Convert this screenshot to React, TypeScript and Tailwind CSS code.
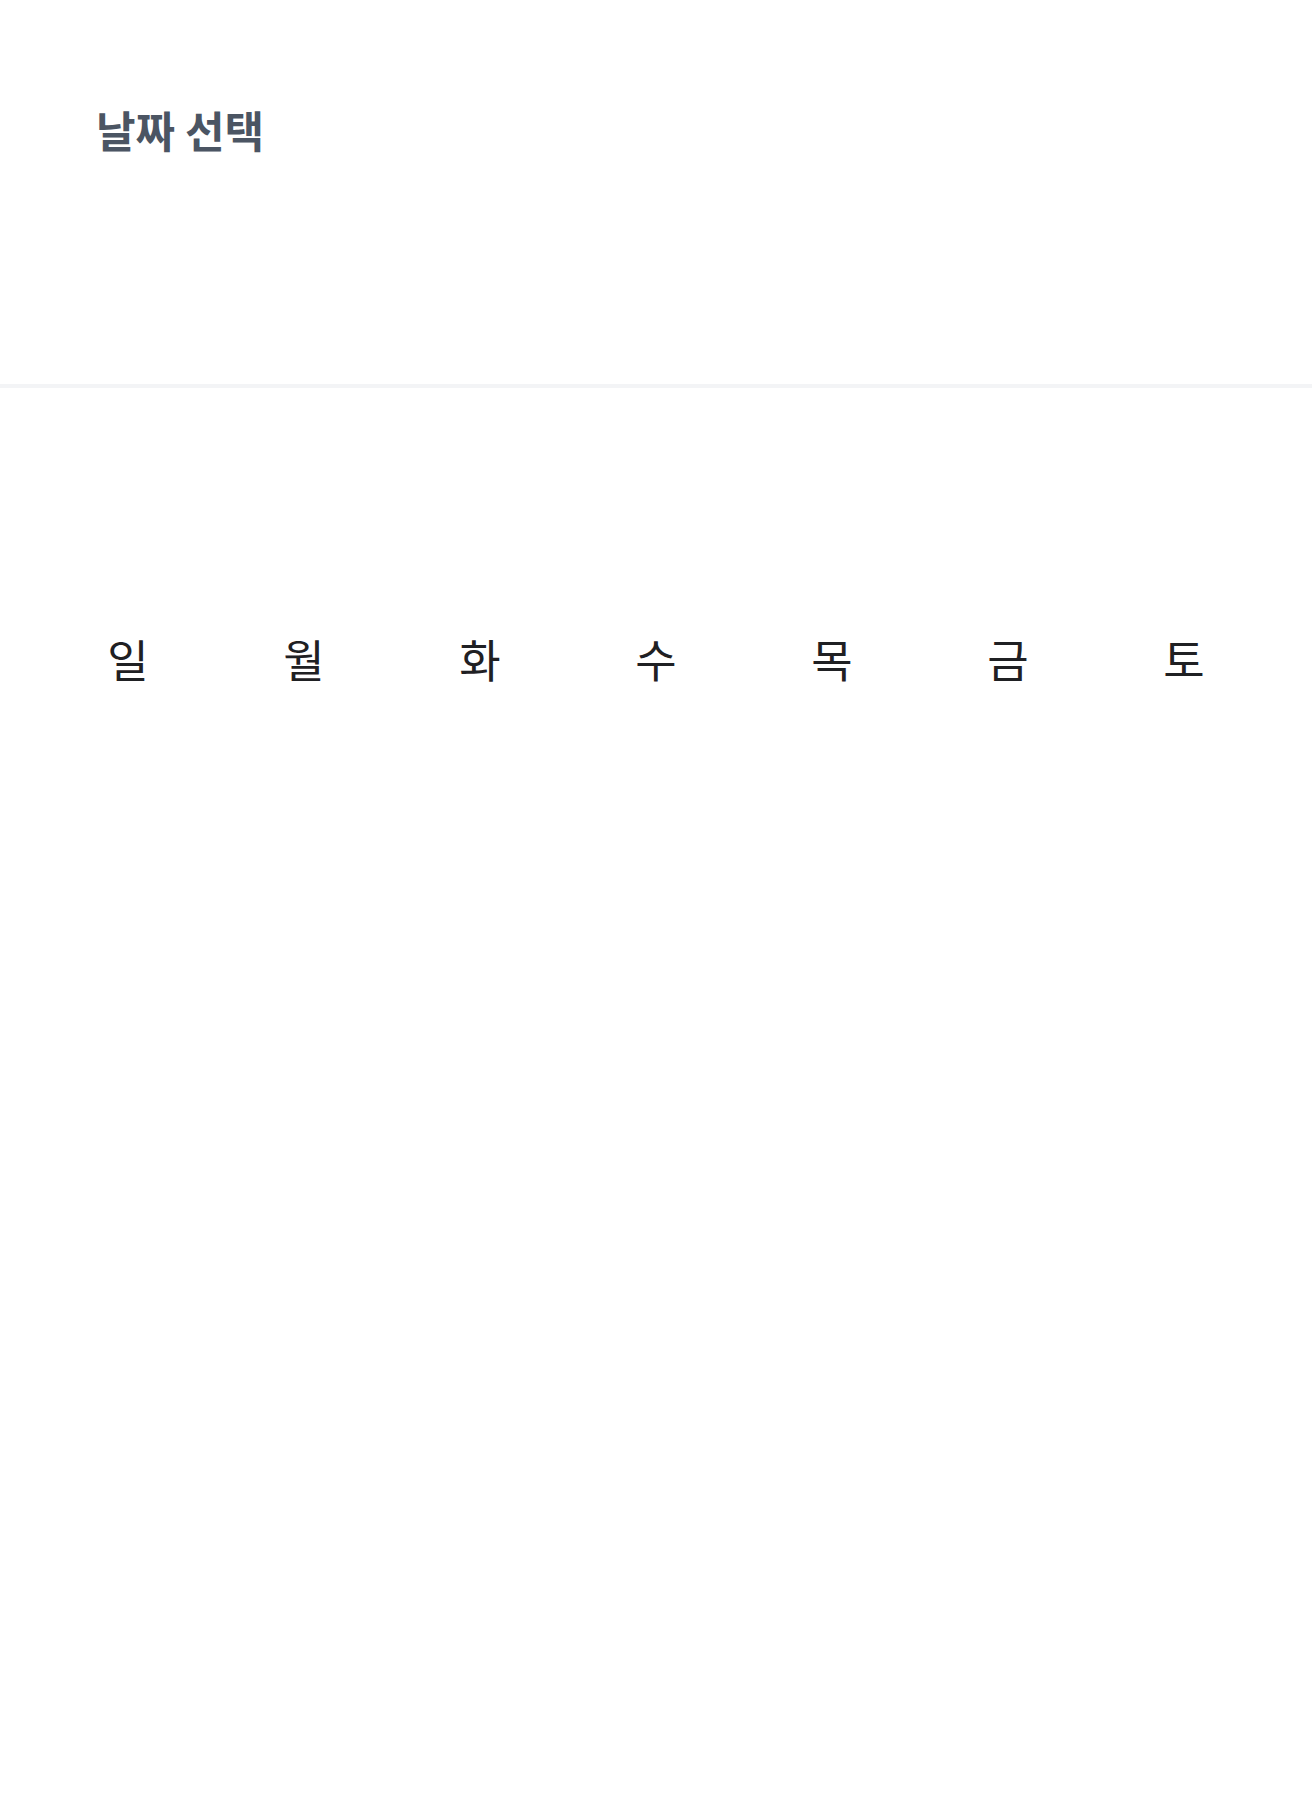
import React from "react";

const days = ["일", "월", "화", "수", "목", "금", "토"];

export default function App() {
  return (
    <div
      className="min-h-[1796px] w-full bg-white"
      style={{ fontFamily: '"Noto Sans CJK KR", "Noto Sans", sans-serif' }}
    >
      <header className="h-[384px] px-[96px] pt-[97px]">
        <h1 className="text-[43px] font-bold leading-[1.5] text-[#4b5563]">날짜 선택</h1>
      </header>
      <div className="h-[4px] bg-[#f3f4f6]" />
      <div className="grid grid-cols-7 px-[40px] pt-[237px]">
        {days.map((d) => (
          <div key={d} className="text-center text-[45px] leading-[1.5] text-[#1f2023]">
            {d}
          </div>
        ))}
      </div>
    </div>
  );
}
